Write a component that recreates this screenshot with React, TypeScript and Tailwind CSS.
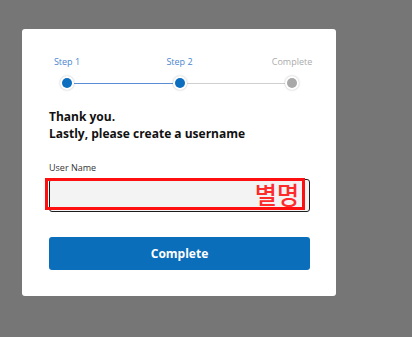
import React from "react";

function Dot({ active }: { active: boolean }) {
  return (
    <div className="w-[14px] h-[14px] rounded-full bg-white shadow-[0_0_2px_rgba(0,0,0,0.3)] flex items-center justify-center shrink-0">
      <div className={`w-[10px] h-[10px] rounded-full ${active ? "bg-[#0b6ebf]" : "bg-[#a8a8a8]"}`} />
    </div>
  );
}

export default function App() {
  return (
    <div className="w-[412px] h-[337px] bg-[#767676] overflow-hidden pt-[29px] pl-[22px]" style={{ fontFamily: '"Open Sans", "Noto Sans", sans-serif' }}>
      <div className="w-[314px] h-[267px] bg-white rounded-[3px] pl-[27px] pr-[26px] pt-[27px]">
        <div className="flex justify-between text-[9px] leading-[12px]">
          <div className="w-[36px] text-center text-[#4a86cf] whitespace-nowrap">Step 1</div>
          <div className="w-[36px] text-center text-[#4a86cf] whitespace-nowrap">Step 2</div>
          <div className="w-[36px] flex justify-center text-[#ababab] whitespace-nowrap">Complete</div>
        </div>
        <div className="flex items-center px-[11px] mt-[8px]">
          <Dot active />
          <div className="flex-1 h-px bg-[#5a8dd6]" />
          <Dot active />
          <div className="flex-1 h-px bg-[#cfcfcf]" />
          <Dot active={false} />
        </div>
        <div className="mt-[18px] text-[12px] leading-[17px] font-bold text-[#111]">
          <div>Thank you.</div>
          <div>Lastly, please create a username</div>
        </div>
        <div className="mt-[20px] text-[9px] leading-[12px] text-[#333]">User Name</div>
        <div className="relative mt-[5px] h-[33px]">
          <div className="h-full w-full rounded-[3px] border border-[#1e1e1e] bg-[#f3f3f3]" />
          <div className="absolute left-[-4px] top-[-1px] w-[260px] h-[32px] border-[3px] border-[#ff1010] flex items-center justify-end pr-[3px]">
            <span className="text-[#ff2a2a] text-[24px] leading-none font-medium" style={{ fontFamily: '"Noto Sans CJK KR", sans-serif' }}>별명</span>
          </div>
        </div>
        <button className="mt-[25px] w-full h-[33px] rounded-[3px] bg-[#0b6ebb] text-white text-[12px] font-bold flex items-center justify-center">
          Complete
        </button>
      </div>
    </div>
  );
}
